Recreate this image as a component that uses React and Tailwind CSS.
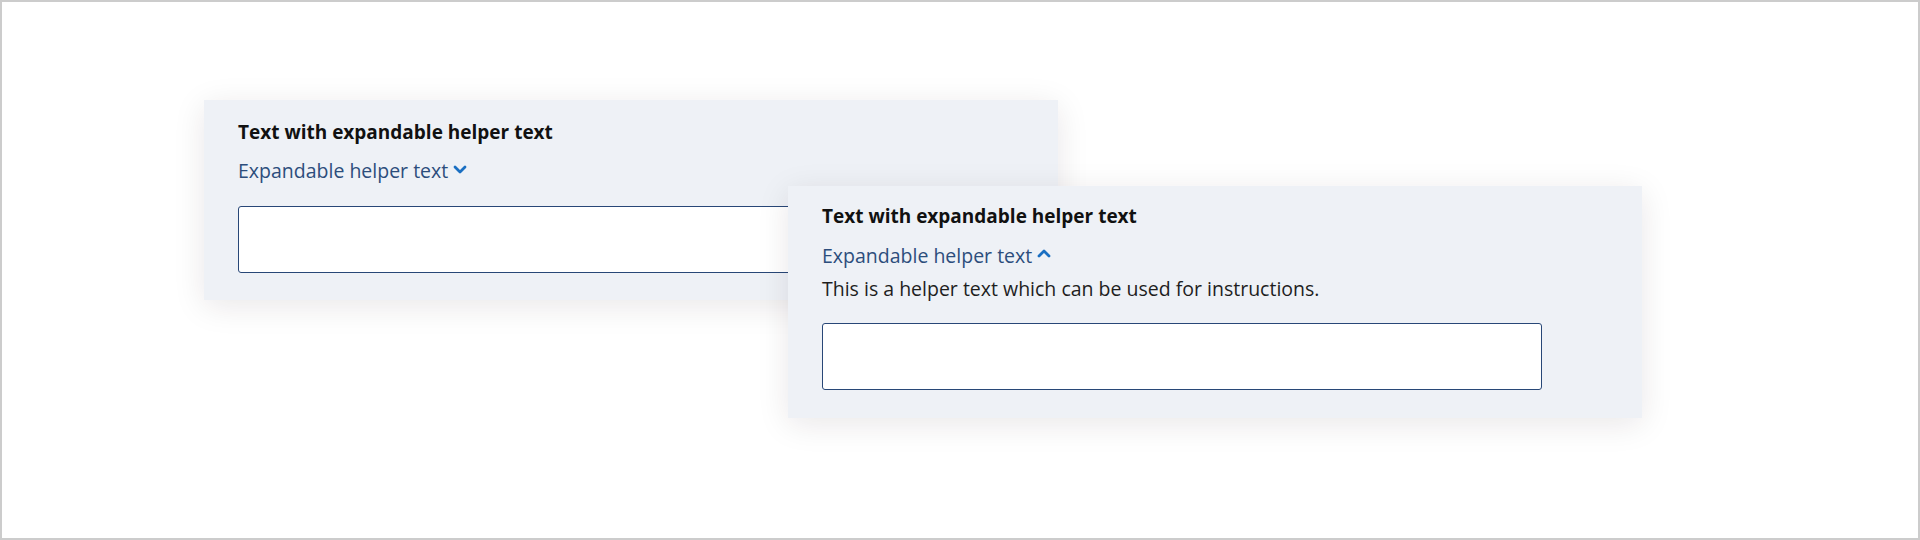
import React from "react";

function Chevron({ up }) {
  return (
    <svg
      width="14"
      height="9"
      viewBox="0 0 14 9"
      className={up ? "relative top-[-3px] rotate-180" : "relative top-[-2px]"}
    >
      <polyline
        points="2,2 7,7 12,2"
        fill="none"
        stroke="#1a6fc2"
        strokeWidth="2.8"
        strokeLinecap="round"
        strokeLinejoin="round"
      />
    </svg>
  );
}

function HelperCard({ expanded, className }) {
  return (
    <div
      className={`relative w-[854px] shrink-0 bg-[#eef1f6] pl-[34px] shadow-[0_6px_30px_rgba(40,20,30,0.10)] ${
        expanded ? "pt-[18px] pb-[28px]" : "pt-[20px] pb-[27px]"
      } ${className}`}
    >
      {/* LABEL */}
      <div className="text-[19px] leading-[24px] font-bold text-[#111111]">
        Text with expandable helper text
      </div>

      {/* TOGGLE */}
      <button
        className={`flex items-center gap-[5px] text-[19.5px] leading-[24px] text-[#2c4d7c] ${
          expanded ? "mt-4" : "mt-[15px]"
        }`}
      >
        <span>Expandable helper text</span>
        <Chevron up={expanded} />
      </button>

      {expanded && (
        <div className="mt-[9px] text-[19.5px] leading-[24px] text-[#1e1e1e]">
          This is a helper text which can be used for instructions.
        </div>
      )}

      {/* INPUT */}
      <input
        type="text"
        className={`block w-[720px] h-[67px] bg-white border border-[#284777] rounded-[3px] outline-none ${
          expanded ? "mt-[22px]" : "mt-[23px]"
        }`}
      />
    </div>
  );
}

export default function App() {
  return (
    <div className="w-[1920px] h-[540px] overflow-hidden bg-white border-2 border-[#cccccc] flex items-start font-['Open_Sans',sans-serif]">
      <HelperCard expanded={false} className="ml-[202px] mt-[98px]" />
      <HelperCard expanded={true} className="ml-[-270px] mt-[184px]" />
    </div>
  );
}
